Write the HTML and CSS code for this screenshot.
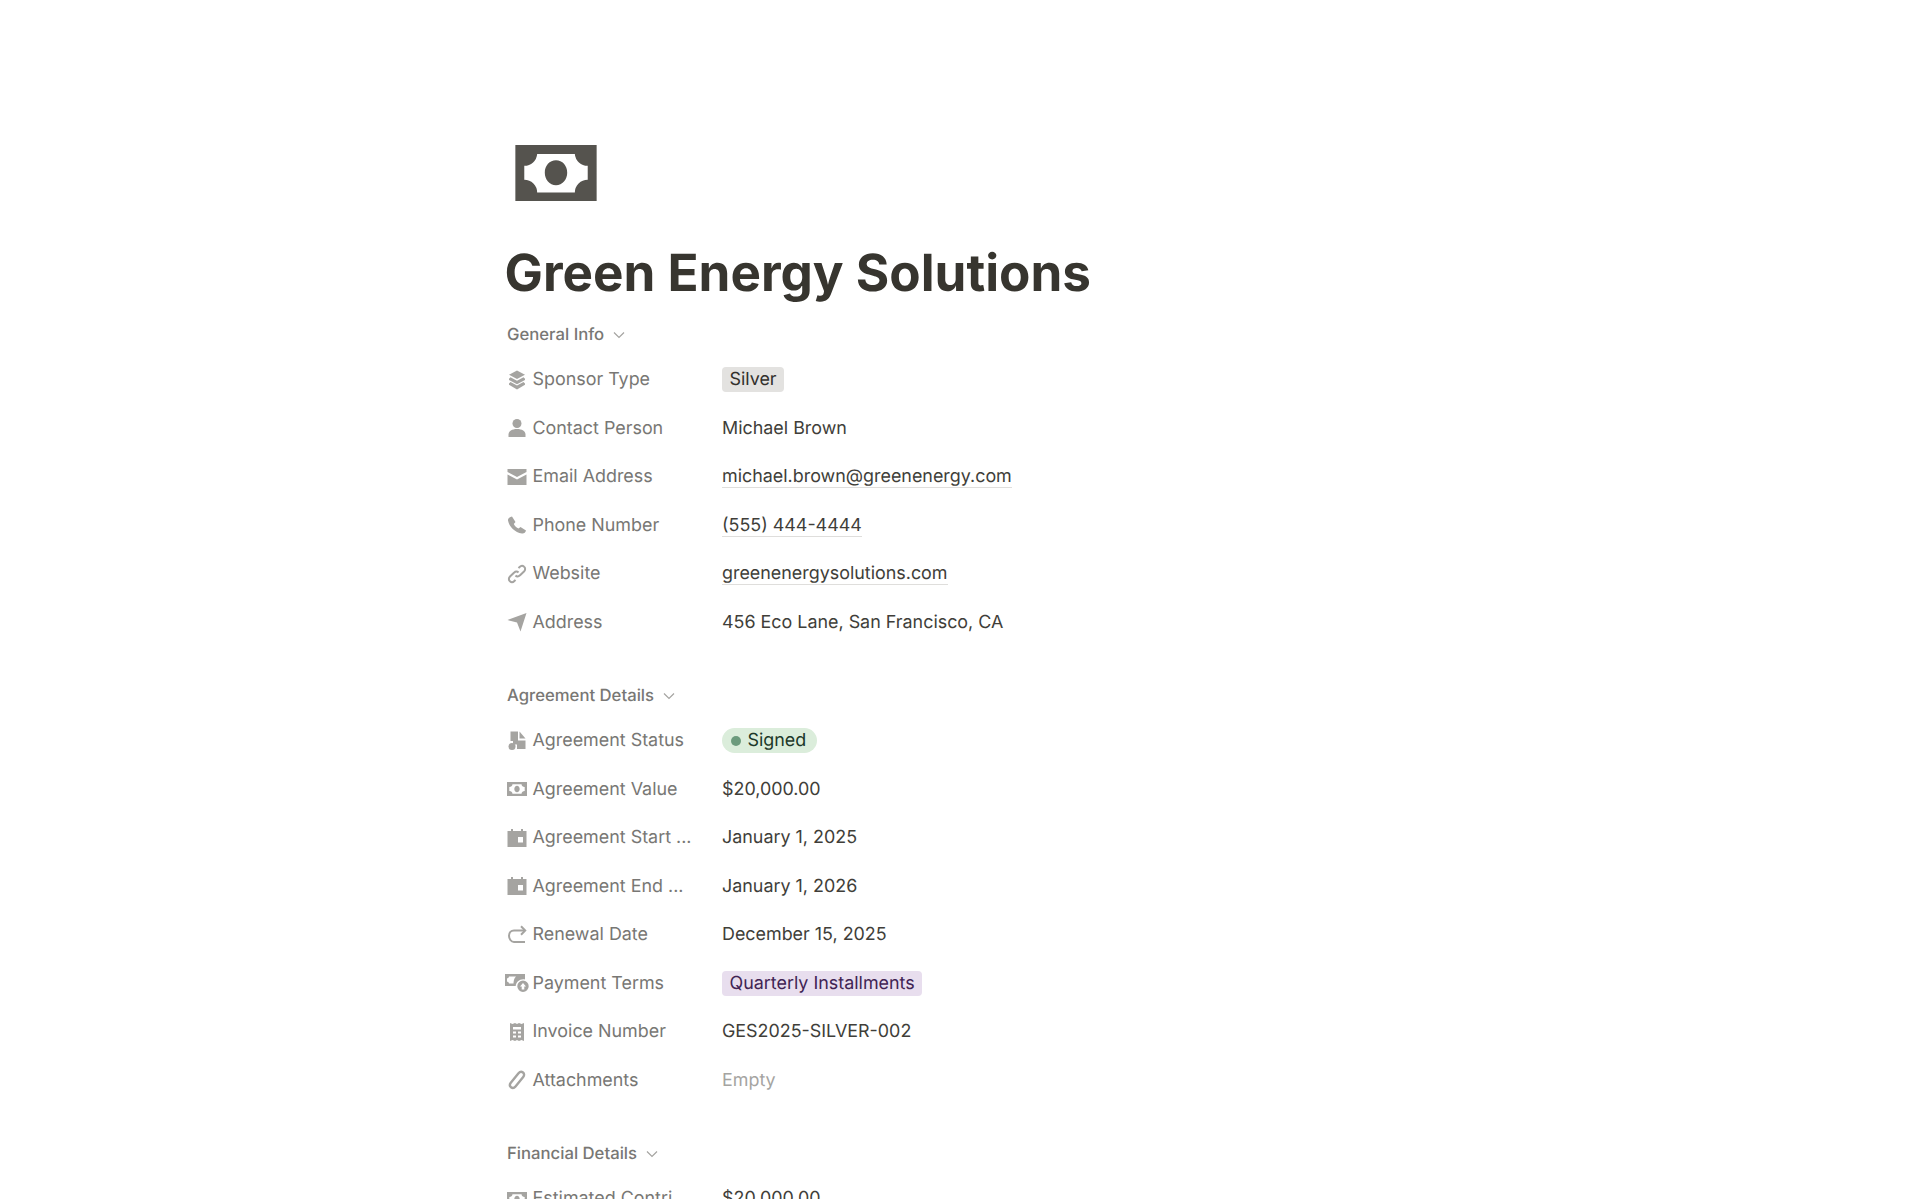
FILE: index.html
```html
<!DOCTYPE html>
<html lang="en">
<head>
   <meta charset="UTF-8">
   <meta name="viewport" content="width=device-width, initial-scale=1.0">
   <title>Green Energy Solutions</title>
   <link rel="stylesheet" href="styles.css">
</head>
<body>
   <div class="page">
      <svg class="page-icon" viewBox="0 0 82 57"><path fill-rule="evenodd" d="M0 0H82V57H0ZM22 9A13 13 0 0 1 9 21V35A13 13 0 0 1 22 48H60A13 13 0 0 1 73 35V21A13 13 0 0 1 60 9ZM41 15.500C47.500 15.500 52.300 21 52.300 28C52.300 35 47.500 40.500 41 40.500C34.500 40.500 29.700 35 29.700 28C29.700 21 34.500 15.500 41 15.500Z"/></svg>
      <h1 class="title">Green Energy Solutions</h1>

      <div class="section-head">General Info <svg class="chevron" viewBox="0 0 14 14"><path d="M2 4.500L7 9.500L12 4.500"/></svg></div>
      <div class="row">
         <div class="label"><span class="ico"><svg viewBox="0 0 20 20"><path d="M10 .5L18 4.800L10 9L2 4.800Z"/><path d="M3.500 7.300L10 10.700L16.500 7.300L18 8.800V10L10 14.300L2 10V8.800Z"/><path d="M3.500 12L10 15.500L16.500 12L18 13.500V14.800L10 19.500L2 14.800V13.500Z"/></svg></span>Sponsor Type</div>
         <div class="value"><span class="tag tag-gray">Silver</span></div>
      </div>
      <div class="row">
         <div class="label"><span class="ico"><svg viewBox="0 0 20 20"><circle cx="10" cy="5.500" r="4.500"/><path d="M1.500 19V16.500C1.500 13.200 5 11 10 11C15 11 18.500 13.200 18.500 16.500V19Z"/></svg></span>Contact Person</div>
         <div class="value">Michael Brown</div>
      </div>
      <div class="row">
         <div class="label"><span class="ico"><svg viewBox="0 0 20 20"><path d="M.5 2H19.500V5L10 10L.5 5Z"/><path d="M.5 7.500L10 12.500L19.500 7.500V18H.5Z"/></svg></span>Email Address</div>
         <div class="value"><span class="link">michael.brown@greenenergy.com</span></div>
      </div>
      <div class="row">
         <div class="label"><span class="ico"><svg viewBox="0 0 20 20"><path d="M5 1.500L8.500 7L6.800 9C7.800 11 9.500 12.500 11.500 13.500L13.500 12L19 15.500C18.500 17.500 17 18.800 15 18.500C8 17.500 2 11.500 1 5.500C.8 3.500 2.500 2 5 1.500Z"/></svg></span>Phone Number</div>
         <div class="value"><span class="link">(555) 444-4444</span></div>
      </div>
      <div class="row">
         <div class="label"><span class="ico"><svg class="stroked" viewBox="0 0 20 20"><path d="M8.500 11.500C9.800 12.800 11.600 12.600 12.800 11.400L17 7.500C18.500 6 18.500 3.800 17.100 2.700C15.700 1.500 13.900 1.700 12.600 3L11.500 4.100"/><path d="M11.500 8.500C10.200 7.200 8.400 7.400 7.200 8.600L3 12.500C1.500 14 1.500 16.200 2.900 17.300C4.300 18.500 6.100 18.300 7.400 17L8.500 15.900"/></svg></span>Website</div>
         <div class="value"><span class="link">greenenergysolutions.com</span></div>
      </div>
      <div class="row">
         <div class="label"><span class="ico"><svg viewBox="0 0 20 20"><path d="M19.500 1L13.500 19.500L10 10.500L.5 8Z"/></svg></span>Address</div>
         <div class="value">456 Eco Lane, San Francisco, CA</div>
      </div>

      <div class="section-head section-gap">Agreement Details <svg class="chevron" viewBox="0 0 14 14"><path d="M2 4.500L7 9.500L12 4.500"/></svg></div>
      <div class="row">
         <div class="label"><span class="ico"><svg viewBox="0 0 20 20"><path d="M3.500 .5H11V9.500H18.500V18H10V13.500H6V10H3.500Z"/><path d="M12.500 .5L18.500 7.500H12.500Z"/><circle cx="5" cy="15.500" r="3.500"/></svg></span>Agreement Status</div>
         <div class="value"><span class="tag tag-status"><i class="dot"></i>Signed</span></div>
      </div>
      <div class="row">
         <div class="label"><span class="ico"><svg viewBox="0 0 20 14"><path fill-rule="evenodd" d="M0 0H20V14H0ZM5.500 2.300A3.200 3.200 0 0 1 2.300 5V9A3.200 3.200 0 0 1 5.500 11.700H14.500A3.200 3.200 0 0 1 17.700 9V5A3.200 3.200 0 0 1 14.500 2.300ZM10 3.800C11.500 3.800 12.700 5.200 12.700 7C12.700 8.800 11.500 10.200 10 10.200C8.500 10.200 7.300 8.800 7.300 7C7.300 5.200 8.500 3.800 10 3.800Z"/></svg></span>Agreement Value</div>
         <div class="value">$20,000.00</div>
      </div>
      <div class="row">
         <div class="label"><span class="ico"><svg viewBox="0 0 20 20"><path fill-rule="evenodd" d="M4 1H6V3H14V1H16V3H19.500V19H.5V3H4ZM11 9V14.500H16V9Z"/></svg></span>Agreement Start ...</div>
         <div class="value">January 1, 2025</div>
      </div>
      <div class="row">
         <div class="label"><span class="ico"><svg viewBox="0 0 20 20"><path fill-rule="evenodd" d="M4 1H6V3H14V1H16V3H19.500V19H.5V3H4ZM11 9V14.500H16V9Z"/></svg></span>Agreement End ...</div>
         <div class="value">January 1, 2026</div>
      </div>
      <div class="row">
         <div class="label"><span class="ico"><svg class="stroked" viewBox="0 0 20 20"><path d="M18 5.500H7C4 5.500 2 7.800 2 10.800C2 13.800 4 17 7 17H18"/><path d="M14 1.300L18.200 5.500L14 9.700"/></svg></span>Renewal Date</div>
         <div class="value">December 15, 2025</div>
      </div>
      <div class="row">
         <div class="label"><span class="ico ico-wide"><svg viewBox="0 0 24 18"><path fill-rule="evenodd" d="M0 0H20V5.500C15 4.500 11 8 10.700 12H0ZM4 2.500Q4 4 2 4.500V7.500Q4 8 4 9.500H8.500C8.500 7 9 4.500 11 2.500Z"/><path fill-rule="evenodd" d="M18 6.500A5.700 5.700 0 1 1 18 17.900A5.700 5.700 0 1 1 18 6.500ZM18 9L15 12.500H16.700V15.500H19.300V12.500H21Z"/></svg></span>Payment Terms</div>
         <div class="value"><span class="tag tag-purple">Quarterly Installments</span></div>
      </div>
      <div class="row">
         <div class="label"><span class="ico"><svg viewBox="0 0 20 20"><path fill-rule="evenodd" d="M3 1L5.500 2L8 1L10 2L12 1L14.500 2L17 1V19L14.500 18L12 19L10 18L8 19L5.500 18L3 19ZM6 5V7.500H14V5ZM6 9.500V11.500H9V9.500ZM11 9.500V11.500H14V9.500ZM6 13.500V15.500H9V13.500ZM11 13.500V15.500H14V13.500Z"/></svg></span>Invoice Number</div>
         <div class="value">GES2025-SILVER-002</div>
      </div>
      <div class="row">
         <div class="label"><span class="ico"><svg class="stroked clip" viewBox="0 0 20 20"><path d="M8.500 16.500L16.200 7C17.500 5.400 17.300 3.500 16 2.500C14.700 1.500 12.800 1.700 11.500 3.300L3.800 12.800C2.600 14.400 2.800 16.300 4 17.300C5.300 18.300 7.200 18.100 8.500 16.500Z"/></svg></span>Attachments</div>
         <div class="value empty">Empty</div>
      </div>

      <div class="section-head section-gap">Financial Details <svg class="chevron" viewBox="0 0 14 14"><path d="M2 4.500L7 9.500L12 4.500"/></svg></div>
      <div class="row">
         <div class="label"><span class="ico"><svg viewBox="0 0 20 14"><path fill-rule="evenodd" d="M0 0H20V14H0ZM5.500 2.300A3.200 3.200 0 0 1 2.300 5V9A3.200 3.200 0 0 1 5.500 11.700H14.500A3.200 3.200 0 0 1 17.700 9V5A3.200 3.200 0 0 1 14.500 2.300ZM10 3.800C11.500 3.800 12.700 5.200 12.700 7C12.700 8.800 11.500 10.200 10 10.200C8.500 10.200 7.300 8.800 7.300 7C7.300 5.200 8.500 3.800 10 3.800Z"/></svg></span>Estimated Contri...</div>
         <div class="value">$20,000.00</div>
      </div>
   </div>
</body>
</html>
```

FILE: styles.css
```css
html, body {
   margin: 0;
   height: 100%;
   overflow: hidden;
   background: #fff;
}
body {
   font-family: Inter, "Noto Sans", sans-serif;
   color: #37352f;
   text-rendering: geometricPrecision;
}
.page {
   width: 900px;
   margin-left: 504.500px;
   padding-top: 144.500px;
}
.page-icon {
   display: block;
   width: 82px;
   height: 56.500px;
   margin-left: 10px;
   fill: #55534e;
}
.title {
   margin: 41.500px 0 0 0;
   font-size: 51.200px;
   font-weight: 700;
   line-height: 61px;
   color: #37352f;
}
.section-head {
   display: flex;
   align-items: center;
   gap: 8px;
   height: 30px;
   margin-top: 16.500px;
   padding-left: 2.500px;
   font-size: 16.700px;
   font-weight: 500;
   color: #787774;
}
.section-gap {
   margin-top: 34.500px;
}
.chevron {
   width: 14px;
   height: 14px;
   fill: none;
   stroke: #a5a4a1;
   stroke-width: 1.200;
}
.row {
   display: flex;
   align-items: center;
   height: 48.500px;
   font-size: 17.900px;
}
.section-head + .row {
   margin-top: 5.500px;
}
.label {
   display: flex;
   align-items: center;
   width: 217.500px;
   flex-shrink: 0;
   padding-left: 2.500px;
   color: #787774;
   box-sizing: border-box;
}
.ico {
   display: flex;
   justify-content: center;
   align-items: center;
   flex-shrink: 0;
   width: 20px;
   height: 20px;
   margin-right: 5.500px;
}
.ico svg {
   width: 20px;
   height: 20px;
   fill: #a5a4a1;
}
.ico-wide svg {
   width: 24px;
   flex-shrink: 0;
}
.ico svg.stroked {
   fill: none;
   stroke: #a5a4a1;
   stroke-width: 2;
}
.ico svg.clip {
   stroke-width: 2.400;
}
.value {
   color: #403e39;
}
.empty {
   color: #a5a4a1;
}
.link {
   border-bottom: 1px solid #dfdedc;
}
.tag {
   display: inline-flex;
   align-items: center;
   height: 25px;
   padding: 0 7.500px;
   border-radius: 4px;
}
.tag-gray {
   background: #e3e2e0;
   color: #32302c;
}
.tag-purple {
   background: #e8deee;
   color: #412454;
}
.tag-status {
   padding: 0 11px 0 9px;
   border-radius: 13px;
   background: #dbeddb;
   color: #1c3829;
}
.dot {
   width: 10px;
   height: 10px;
   margin-right: 6.500px;
   border-radius: 50%;
   background: #6c9b7d;
}
```
